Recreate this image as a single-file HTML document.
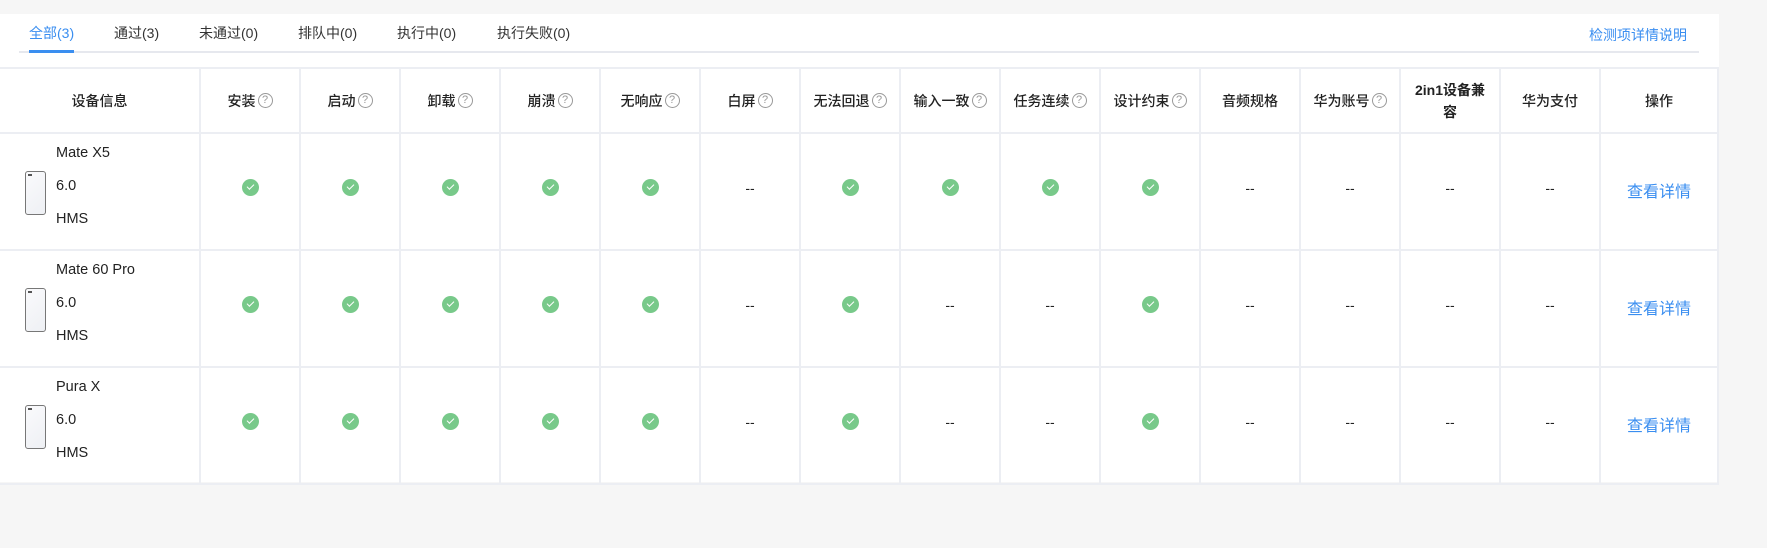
<!DOCTYPE html>
<html><head><meta charset="utf-8"><style>
*{margin:0;padding:0;box-sizing:border-box}
body{width:1767px;height:548px;background:#f6f6f6;font-family:"Liberation Sans","Noto Sans CJK SC",sans-serif;color:#222;position:relative;overflow:hidden}
.panel{position:absolute;left:0;top:14px;width:1719px;height:468px;background:#fff}
.tab{position:absolute;top:33px;transform:translateY(-50%);font-size:14px;color:#333;white-space:nowrap}
.tab.a{color:#3a8ef0}
.line{position:absolute;left:19px;top:51px;width:1680px;height:2px;background:#e6e8ee}
.uline{position:absolute;left:29px;top:50px;width:45px;height:3px;background:#3a8ef0}
.link{position:absolute;left:1589px;top:35px;transform:translateY(-50%);font-size:14px;color:#3a8ef0}
table{position:absolute;left:0;top:67px;border-collapse:collapse;table-layout:fixed}
td{border:2px solid #eceef3;text-align:center;vertical-align:middle;font-size:14px;color:#222;padding:0}
tr.h td{height:65px;font-weight:500}
tr.r td{height:117px;padding-bottom:8px}
tr.r td:first-child{padding-bottom:0}
td:first-child{border-left:none}
.q{display:inline-block;width:15px;height:15px;border:1.3px solid #999;border-radius:50%;font-size:11px;line-height:13px;color:#999;vertical-align:middle;margin-left:2px;margin-top:-2px;font-weight:normal}
.ok{display:inline-block;width:17px;height:17px;border-radius:50%;background:#78c98a;position:relative;vertical-align:middle}
.ok:after{content:"";position:absolute;left:5px;top:5px;width:6px;height:3px;border-left:1.2px solid #fff;border-bottom:1.2px solid #fff;transform:rotate(-45deg)}
.dev{position:relative;height:115px;text-align:left}
.ph{position:absolute;left:25px;top:37px;width:21px;height:44px;border:1.3px solid #777;border-radius:3px;background:linear-gradient(135deg,#fafafc,#eef0f4)}
.ph:before{content:"";position:absolute;left:2px;top:2px;width:4px;height:2px;background:#555}
.dl{position:absolute;left:56px;font-size:14.5px;color:#222;transform:translateY(-50%)}
.det{color:#3a8ef0;font-size:16px}
tr.r td.det{padding-bottom:4px}
</style></head><body>
<div class="panel"></div>
<div class="tab a" style="left:29px">全部(3)</div>
<div class="tab" style="left:114px">通过(3)</div>
<div class="tab" style="left:199px">未通过(0)</div>
<div class="tab" style="left:298px">排队中(0)</div>
<div class="tab" style="left:397px">执行中(0)</div>
<div class="tab" style="left:497px">执行失败(0)</div>
<div class="line"></div><div class="uline"></div>
<div class="link">检测项详情说明</div>
<table>
<colgroup><col style="width:200px"><col style="width:100px"><col style="width:100px"><col style="width:100px"><col style="width:100px"><col style="width:100px"><col style="width:100px"><col style="width:100px"><col style="width:100px"><col style="width:100px"><col style="width:100px"><col style="width:100px"><col style="width:100px"><col style="width:100px"><col style="width:100px"><col style="width:118px"></colgroup>
<tr class="h"><td>设备信息</td><td>安装<span class="q">?</span></td><td>启动<span class="q">?</span></td><td>卸载<span class="q">?</span></td><td>崩溃<span class="q">?</span></td><td>无响应<span class="q">?</span></td><td>白屏<span class="q">?</span></td><td>无法回退<span class="q">?</span></td><td>输入一致<span class="q">?</span></td><td>任务连续<span class="q">?</span></td><td>设计约束<span class="q">?</span></td><td>音频规格</td><td>华为账号<span class="q">?</span></td><td style="font-weight:bold;line-height:22px;padding:0 12px">2in1设备兼容</td><td>华为支付</td><td>操作</td></tr>
<tr class="r"><td><div class="dev"><div class="ph"></div><div class="dl" style="top:19px">Mate X5</div><div class="dl" style="top:52px">6.0</div><div class="dl" style="top:85px">HMS</div></div></td><td><span class="ok"></span></td><td><span class="ok"></span></td><td><span class="ok"></span></td><td><span class="ok"></span></td><td><span class="ok"></span></td><td>--</td><td><span class="ok"></span></td><td><span class="ok"></span></td><td><span class="ok"></span></td><td><span class="ok"></span></td><td>--</td><td>--</td><td>--</td><td>--</td><td class="det">查看详情</td></tr>
<tr class="r"><td><div class="dev"><div class="ph"></div><div class="dl" style="top:19px">Mate 60 Pro</div><div class="dl" style="top:52px">6.0</div><div class="dl" style="top:85px">HMS</div></div></td><td><span class="ok"></span></td><td><span class="ok"></span></td><td><span class="ok"></span></td><td><span class="ok"></span></td><td><span class="ok"></span></td><td>--</td><td><span class="ok"></span></td><td>--</td><td>--</td><td><span class="ok"></span></td><td>--</td><td>--</td><td>--</td><td>--</td><td class="det">查看详情</td></tr>
<tr class="r"><td><div class="dev"><div class="ph"></div><div class="dl" style="top:19px">Pura X</div><div class="dl" style="top:52px">6.0</div><div class="dl" style="top:85px">HMS</div></div></td><td><span class="ok"></span></td><td><span class="ok"></span></td><td><span class="ok"></span></td><td><span class="ok"></span></td><td><span class="ok"></span></td><td>--</td><td><span class="ok"></span></td><td>--</td><td>--</td><td><span class="ok"></span></td><td>--</td><td>--</td><td>--</td><td>--</td><td class="det">查看详情</td></tr>
</table>
</body></html>
